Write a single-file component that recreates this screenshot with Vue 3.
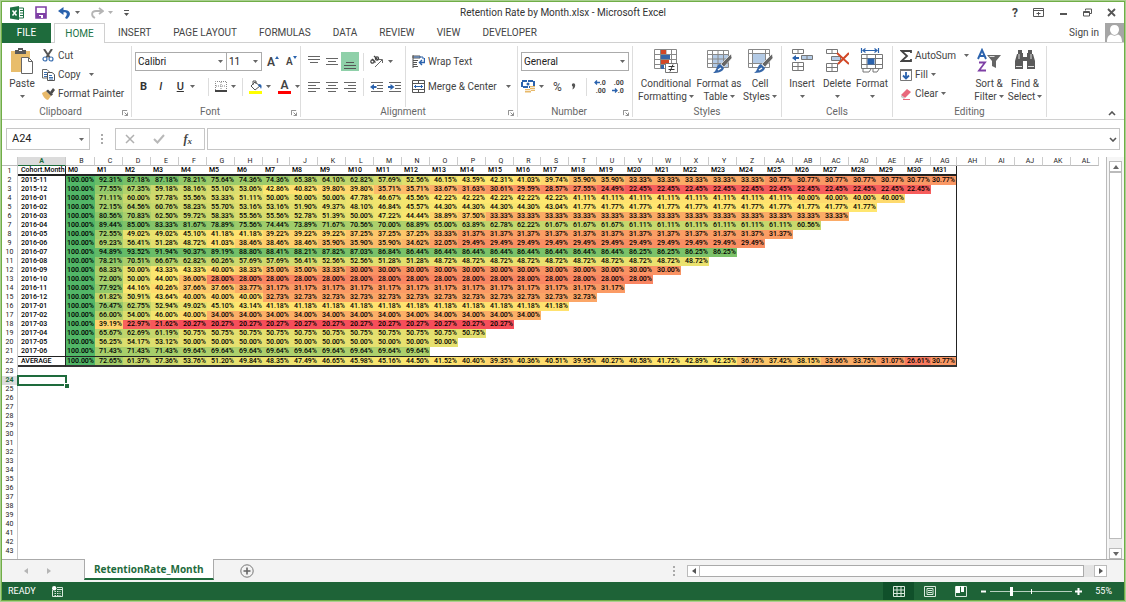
<script setup>
const repeat = (value, count) => Array(count).fill(value)

const cohorts = [
  { name: '2015-11', rates: [92.31, 87.18, 87.18, 78.21, 75.64, 74.36, 74.36, 65.38, 64.1, 62.82, 57.69, 52.56, 46.15, 43.59, 42.31, 41.03, 39.74, 35.9, 35.9, ...repeat(33.33, 5), ...repeat(30.77, 7)] },
  { name: '2015-12', rates: [77.55, 67.35, 59.18, 58.16, 55.1, 53.06, 42.86, 40.82, 39.8, 39.8, 35.71, 35.71, 33.67, 31.63, 30.61, 29.59, 28.57, 27.55, 24.49, ...repeat(22.45, 11)] },
  { name: '2016-01', rates: [71.11, 60, 57.78, 55.56, 53.33, 51.11, 50, 50, 50, 47.78, 46.67, 45.56, ...repeat(42.22, 5), ...repeat(41.11, 8), ...repeat(40, 4)] },
  { name: '2016-02', rates: [72.15, 64.56, 60.76, 58.23, 55.7, 53.16, 53.16, 51.9, 49.37, 48.1, 46.84, 45.57, ...repeat(44.3, 4), 43.04, ...repeat(41.77, 11)] },
  { name: '2016-03', rates: [80.56, 70.83, 62.5, 59.72, 58.33, 55.56, 55.56, 52.78, 51.39, 50, 47.22, 44.44, 38.89, 37.5, ...repeat(33.33, 13)] },
  { name: '2016-04', rates: [89.44, 85, 83.33, 81.67, 78.89, 75.56, 74.44, 73.89, 71.67, 70.56, 70, 68.89, 65, 63.89, 62.78, 62.22, ...repeat(61.67, 3), ...repeat(61.11, 6), 60.56] },
  { name: '2016-05', rates: [72.55, 49.02, 49.02, 45.1, 41.18, 41.18, 39.22, 39.22, 39.22, 37.25, 37.25, 37.25, 33.33, ...repeat(31.37, 12)] },
  { name: '2016-06', rates: [69.23, 56.41, 51.28, 48.72, 41.03, 38.46, 38.46, 38.46, 35.9, 35.9, 35.9, 34.62, 32.05, ...repeat(29.49, 11)] },
  { name: '2016-07', rates: [94.89, 93.52, 91.94, 90.37, 89.19, 88.8, 88.41, 88.21, 87.82, 87.03, 86.84, ...repeat(86.44, 8), ...repeat(86.25, 4)] },
  { name: '2016-08', rates: [78.21, 70.51, 66.67, 62.82, 60.26, 57.69, 57.69, 56.41, 52.56, 52.56, 51.28, 51.28, ...repeat(48.72, 10)] },
  { name: '2016-09', rates: [68.33, 50, 43.33, 43.33, 40, 38.33, 35, 35, 33.33, ...repeat(30, 12)] },
  { name: '2016-10', rates: [72, 50, 44, 36, ...repeat(28, 16)] },
  { name: '2016-11', rates: [77.92, 44.16, 40.26, 37.66, 37.66, 33.77, ...repeat(31.17, 13)] },
  { name: '2016-12', rates: [61.82, 50.91, 43.64, 40, 40, 40, ...repeat(32.73, 12)] },
  { name: '2017-01', rates: [76.47, 62.75, 52.94, 49.02, 45.1, 43.14, ...repeat(41.18, 11)] },
  { name: '2017-02', rates: [66, 54, 46, 40, ...repeat(34, 12)] },
  { name: '2017-03', rates: [39.19, 22.97, 21.62, ...repeat(20.27, 12)] },
  { name: '2017-04', rates: [65.67, 62.69, 61.19, ...repeat(50.75, 11)] },
  { name: '2017-05', rates: [56.25, 54.17, 53.12, ...repeat(50, 10)] },
  { name: '2017-06', rates: [71.43, 71.43, 71.43, ...repeat(69.64, 9)] },
  { name: 'AVERAGE', rates: [72.65, 61.37, 57.36, 53.76, 51.2, 49.84, 48.35, 47.49, 46.65, 45.98, 45.16, 44.5, 41.52, 40.4, 39.35, 40.36, 40.51, 39.95, 40.27, 40.58, 41.72, 42.89, 42.25, 36.75, 37.42, 38.15, 33.66, 33.75, 31.07, 26.61, 30.77] },
]

const letter = (n) => (n < 26 ? String.fromCharCode(65 + n) : 'A' + String.fromCharCode(39 + n))
const columns = Array.from({ length: 38 }, (_, i) => letter(i))
const months = Array.from({ length: 32 }, (_, i) => 'M' + i)
const emptyRows = Array.from({ length: 21 }, (_, i) => i + 23)

const narrow = ['I', 'R']
const wide = ['B', 'AH', 'AI']
const columnClass = (c) => {
  if (c === 'A') return 'c-first'
  if (c === 'AF' || c === 'AG') return 'c-last'
  if (narrow.includes(c)) return 'c-narrow'
  return wide.includes(c) ? 'c-wide' : 'c-std'
}

// Three-stop colour scale: red at the minimum, yellow at the middle, green at 100%.
const low = [246, 78, 90]
const mid = [255, 232, 112]
const high = [82, 182, 103]
const shade = (v) => {
  const [from, to, t] = v < 42 ? [low, mid, (v - 20.27) / 21.73] : [mid, high, (v - 42) / 58]
  return `rgb(${from.map((c, i) => Math.round(c + (to[i] - c) * t)).join(',')})`
}

const tabs = ['INSERT', 'PAGE LAYOUT', 'FORMULAS', 'DATA', 'REVIEW', 'VIEW', 'DEVELOPER']
</script>

<template>
  <div class="window">
    <header class="titlebar">
      <div class="quick">
        <svg width="14" height="14" viewBox="0 0 14 14"><path d="M0 1.500 9 0v14L0 12.500z" fill="#1e7145" /><path d="M9 2h4.500v10H9" fill="#fff" stroke="#1e7145" /><path d="M10 4.500h3M10 7h3M10 9.500h3" stroke="#1e7145" /><path d="m2.500 4.500 4 5m0-5-4 5" stroke="#fff" stroke-width="1.500" /></svg>
        <button aria-label="Save"><svg width="12" height="13" viewBox="0 0 12 13"><path d="M1 1h10v11H1z" fill="#fff" stroke="#7e3fa5" stroke-width="1.600" /><path d="M1 7h10v5H1z" fill="#7e3fa5" /><path d="M4 9h4v3H4z" fill="#fff" /><path d="M4 10h2v2H4z" fill="#7e3fa5" /></svg></button>
        <button class="undo" aria-label="Undo"><svg width="13" height="12" viewBox="0 0 13 12"><path d="M5.500 0 0 4l5.500 4V5.200C9 5 10 6.500 7 11l2 1c5-5 3.500-9-3.500-9z" fill="#2a62ad" /></svg><svg class="caret" viewBox="0 0 5 3"><path d="M0 0h5L2.500 3z" /></svg></button>
        <button class="redo" aria-label="Redo"><svg width="13" height="12" viewBox="0 0 13 12"><path d="m8 1 4 3-4 3M12 4H5C0 4 0 9 4 11" fill="none" stroke="#b5b5b5" stroke-width="1.800" /></svg><svg class="caret" viewBox="0 0 5 3"><path d="M0 0h5L2.500 3z" /></svg></button>
        <button aria-label="Customize Quick Access Toolbar"><svg width="5" height="6" viewBox="0 0 5 6"><path d="M0 0h5v1H0zM0 3h5L2.500 6z" fill="#555" /></svg></button>
      </div>
      <h1>Retention Rate by Month.xlsx - Microsoft Excel</h1>
      <div class="controls">
        <button class="help" aria-label="Help">?</button>
        <button aria-label="Ribbon Display Options"><svg width="11" height="9" viewBox="0 0 11 9"><path d="M.5.500h10v8H.5zM.5 2.500h10M5.500 7.500V4M3.500 5.500h4" fill="none" stroke="#555" /></svg></button>
        <button aria-label="Minimize"><svg width="9" height="9" viewBox="0 0 9 9"><path d="M1 5h7v2H1z" fill="#555" /></svg></button>
        <button aria-label="Restore"><svg width="9" height="9" viewBox="0 0 9 9"><path d="M2.500 2.500V1h6v4.500H7M.5 3.500h6v4.500h-6zM.5 4.500h6" fill="none" stroke="#555" /></svg></button>
        <button aria-label="Close"><svg width="9" height="9" viewBox="0 0 9 9"><path d="m1 1 7 7m0-7L1 8" stroke="#555" stroke-width="1.800" /></svg></button>
      </div>
    </header>

    <nav class="tabs">
      <button class="file">FILE</button>
      <button class="home">HOME</button>
      <button v-for="t in tabs" :key="t" class="tab">{{ t }}</button>
      <a class="signin" href="#">Sign in</a>
      <svg class="avatar" viewBox="0 0 19 19"><path d="M0 0h19v19H0z" fill="#a6a6a6" /><path d="M9.500 2c3 0 4.500 2 4.500 4.500S12 12 9.500 12 5 9 5 6.500 6.500 2 9.500 2z" fill="#fff" /><path d="M2 19c0-5 2-7 4-7.500 2 1.500 5 1.500 7 0 2 .5 4 2.500 4 7.500z" fill="#fff" /></svg>
    </nav>

    <section class="ribbon">
      <div class="group clipboard">
        <div class="body">
          <button class="big paste"><svg width="24" height="26" viewBox="0 0 24 26"><path d="M1 3h19v21H1z" fill="#e8bd6c" /><path d="M5 2h3V0h5v2h3v4H5z" fill="#595959" /><path d="M9 2h3v1H9z" fill="#fff" /><path d="M11.500 9.500h7l4 4v12h-11z" fill="#fff" stroke="#666" /><path d="M18.500 9.500v4h4" fill="none" stroke="#666" /></svg>Paste<svg class="caret" viewBox="0 0 5 3"><path d="M0 0h5L2.500 3z" /></svg></button>
          <div class="list">
            <button><svg width="13" height="13" viewBox="0 0 13 13"><path d="M2 0 8 9M10 0 4 9" stroke="#555" stroke-width="2" /><circle cx="3" cy="10" r="2" fill="#fff" stroke="#3b6fb0" stroke-width="1.200" /><circle cx="9" cy="10" r="2" fill="#fff" stroke="#3b6fb0" stroke-width="1.200" /></svg>Cut</button>
            <button><svg width="13" height="12" viewBox="0 0 13 12"><path d="M.5.500H5l2 2V9H.5z" fill="#fff" stroke="#666" /><path d="M2 3.500h3M2 5.500h3M2 7.500h3" stroke="#3b6fb0" /><path d="M5.500 3.500H10l2.500 2v6h-7z" fill="#fff" stroke="#555" /><path d="M7 6.500h3M7 8.500h4M7 10h4" stroke="#3b6fb0" /></svg>Copy<svg class="caret far" viewBox="0 0 5 3"><path d="M0 0h5L2.500 3z" /></svg></button>
            <button><svg width="13" height="12" viewBox="0 0 13 12"><path d="m0 5 4-2 5 5-3 4c-2 0-5-3-6-7z" fill="#e8b96a" /><path d="m4 3 2-1.500 5 5L9 8z" fill="#4a4a4a" /><path d="m8 4 3-4 2 2-3 4z" fill="#4a4a4a" /></svg>Format Painter</button>
          </div>
        </div>
        <div class="caption">Clipboard<svg class="launch" viewBox="0 0 7 7"><path d="M.5 6V.500H6M3 3l3 3M6.500 3v3.500H3" /></svg></div>
      </div>

      <div class="group font">
        <div class="body rows">
          <div class="row">
            <label class="combo family"><select aria-label="Font"><option>Calibri</option></select><svg class="caret" viewBox="0 0 5 3"><path d="M0 0h5L2.500 3z" /></svg></label>
            <label class="combo size"><select aria-label="Font Size"><option>11</option></select><svg class="caret" viewBox="0 0 5 3"><path d="M0 0h5L2.500 3z" /></svg></label>
            <button class="grow" aria-label="Increase Font Size"><span class="ltr">A</span><svg width="4" height="12" viewBox="0 0 4 12"><path d="M0 3h4L2 0z" fill="#2a62ad" /></svg></button>
            <button class="shrink" aria-label="Decrease Font Size"><span class="ltr">A</span><svg width="4" height="12" viewBox="0 0 4 12"><path d="M0 0h4L2 3z" fill="#2a62ad" /></svg></button>
          </div>
          <div class="row second">
            <button class="g b" aria-label="Bold"><b>B</b></button>
            <button class="g i" aria-label="Italic"><i>I</i></button>
            <button class="g u" aria-label="Underline"><u>U</u><svg class="caret" viewBox="0 0 5 3"><path d="M0 0h5L2.500 3z" /></svg></button>
            <span class="sep" />
            <button aria-label="Borders"><svg width="12" height="11" viewBox="0 0 12 11"><path d="M.5 9V.500h11V9M6 1v8M1 5h10" fill="none" stroke="#888" stroke-dasharray="1 1" /><path d="M0 10h12" stroke="#444" stroke-width="2" /></svg><svg class="caret" viewBox="0 0 5 3"><path d="M0 0h5L2.500 3z" /></svg></button>
            <span class="sep" />
            <button aria-label="Fill Color"><svg width="13" height="14" viewBox="0 0 13 14"><path d="m2 6 4-4 5 4-5 4z" fill="#fff" stroke="#555" /><path d="M4 5V1h3v3" fill="none" stroke="#555" /><path d="M10 4c3 0 3 3 2 5-1-2-1-3-3-3z" fill="#2a62ad" /><path d="M0 11h13v3H0z" fill="#ff0" /></svg><svg class="caret" viewBox="0 0 5 3"><path d="M0 0h5L2.500 3z" /></svg></button>
            <button class="fcolor" aria-label="Font Color"><span class="ltr">A</span><svg class="caret" viewBox="0 0 5 3"><path d="M0 0h5L2.500 3z" /></svg></button>
          </div>
        </div>
        <div class="caption">Font<svg class="launch" viewBox="0 0 7 7"><path d="M.5 6V.500H6M3 3l3 3M6.500 3v3.500H3" /></svg></div>
      </div>

      <div class="group align">
        <div class="body">
          <div class="rows">
            <div class="row tight">
              <button class="cell" aria-label="Top Align"><svg width="12" height="14" viewBox="0 0 12 14"><path d="M0 1.500h12M0 4.500h12M2 7.500h8" stroke="#666" /></svg></button>
              <button class="cell" aria-label="Middle Align"><svg width="12" height="14" viewBox="0 0 12 14"><path d="M0 3.500h12M2 6.500h8M0 9.500h12" stroke="#666" /></svg></button>
              <button class="cell on" aria-label="Bottom Align"><svg width="12" height="14" viewBox="0 0 12 14"><path d="M2 7.500h8M0 10.500h12M0 13.500h12" stroke="#555" /></svg></button>
              <span class="sep" />
              <button class="orient" aria-label="Orientation"><svg width="14" height="13" viewBox="0 0 14 13"><path d="M5 12 12 5M9 4.500h3.500V8" fill="none" stroke="#666" /><circle cx="2.500" cy="6.500" r="1.700" fill="none" stroke="#444" stroke-width="1.200" /><path d="m2 4 3.500 3.500M4 1l4 4" stroke="#444" stroke-width="1.200" /><circle cx="7" cy="3.500" r="1.600" fill="none" stroke="#444" stroke-width="1.200" /></svg><svg class="caret" viewBox="0 0 5 3"><path d="M0 0h5L2.500 3z" /></svg></button>
            </div>
            <div class="row tight second">
              <button class="cell" aria-label="Align Left"><svg width="12" height="10" viewBox="0 0 12 10"><path d="M0 .5h12M0 3.500h8M0 6.500h12M0 9.500h8" stroke="#666" /></svg></button>
              <button class="cell" aria-label="Center"><svg width="12" height="10" viewBox="0 0 12 10"><path d="M0 .5h12M2 3.500h8M0 6.500h12M2 9.500h8" stroke="#666" /></svg></button>
              <button class="cell" aria-label="Align Right"><svg width="12" height="10" viewBox="0 0 12 10"><path d="M0 .5h12M4 3.500h8M0 6.500h12M4 9.500h8" stroke="#666" /></svg></button>
              <span class="sep" />
              <button class="cell" aria-label="Decrease Indent"><svg width="14" height="10" viewBox="0 0 14 10"><path d="M1 .5h12M7 3.500h6M7 6.500h6M1 9.500h12" stroke="#666" /><path d="M0 5l4-3v2h2.500v2H4v2z" fill="#2a62ad" /></svg></button>
              <button class="cell" aria-label="Increase Indent"><svg width="14" height="10" viewBox="0 0 14 10"><path d="M1 .5h12M7 3.500h6M7 6.500h6M1 9.500h12" stroke="#666" /><path d="M6.500 5l-4-3v2H0v2h2.500v2z" fill="#2a62ad" /></svg></button>
            </div>
          </div>
          <div class="rows wraps">
            <div class="row"><button><svg width="13" height="13" viewBox="0 0 13 13"><path d="M1 0v13M1 5.500h5M1 7.500h4M1 9.500h4M1 11.500h5M1 1h7v2H1z" fill="none" stroke="#555" /><path d="M2 2h9v2" stroke="#2a62ad" fill="none" /><path d="M12.500 3v4.500H8M10 5 7.500 7.500 10 10" fill="none" stroke="#2a62ad" stroke-width="1.400" /></svg>Wrap Text</button></div>
            <div class="row second"><button><svg width="13" height="13" viewBox="0 0 13 13"><path d="M.5.500h12v12H.5zM.5 3.500h12M.5 9.500h12M6.500 0v3.500M6.500 9.500V13" fill="none" stroke="#555" /><path d="M2 6.500h9M4 5 2.500 6.500 4 8M9 5l1.500 1.500L9 8" fill="none" stroke="#2a62ad" /></svg>Merge &amp; Center<svg class="caret far" viewBox="0 0 5 3"><path d="M0 0h5L2.500 3z" /></svg></button></div>
          </div>
        </div>
        <div class="caption">Alignment<svg class="launch" viewBox="0 0 7 7"><path d="M.5 6V.500H6M3 3l3 3M6.500 3v3.500H3" /></svg></div>
      </div>

      <div class="group number">
        <div class="body rows">
          <div class="row">
            <label class="combo format"><select aria-label="Number Format"><option>General</option></select><svg class="caret" viewBox="0 0 5 3"><path d="M0 0h5L2.500 3z" /></svg></label>
          </div>
          <div class="row second">
            <button aria-label="Accounting Number Format"><svg width="14" height="13" viewBox="0 0 14 13"><path d="M1 1h12v6H1z" fill="#fff" stroke="#2a62ad" stroke-width="2" stroke-dasharray="5 1" /><circle cx="7" cy="4" r="1.500" fill="#2a62ad" /><path d="M4 9h6v3.500H4zM9 6h5v5H9z" fill="#e8b96a" /><path d="M4 10.500h6M9 7.500h5M9 9.500h5" stroke="#fff" stroke-width=".7" /></svg><svg class="caret" viewBox="0 0 5 3"><path d="M0 0h5L2.500 3z" /></svg></button>
            <button class="pct" aria-label="Percent Style">%</button>
            <button class="comma" aria-label="Comma Style"><svg width="5" height="8" viewBox="0 0 5 8"><circle cx="2.500" cy="2" r="1.700" fill="#555" /><path d="M4.200 2c0 2-1 3.500-2.700 4.500L2 3z" fill="#555" /></svg></button>
            <span class="sep" />
            <button class="dec" aria-label="Increase Decimal"><span><svg width="6" height="5" viewBox="0 0 6 5"><path d="M6 2.500H1M3 .5 1 2.500l2 2" fill="none" stroke="#2a62ad" stroke-width="1.300" /></svg>.0</span><span>.00</span></button>
            <button class="dec" aria-label="Decrease Decimal"><span>.00</span><span><svg width="6" height="5" viewBox="0 0 6 5"><path d="M0 2.500h5M3 .5l2 2-2 2" fill="none" stroke="#2a62ad" stroke-width="1.300" /></svg>.0</span></button>
          </div>
        </div>
        <div class="caption">Number<svg class="launch" viewBox="0 0 7 7"><path d="M.5 6V.500H6M3 3l3 3M6.500 3v3.500H3" /></svg></div>
      </div>

      <div class="group styles">
        <div class="body">
          <button class="big conditional"><svg width="26" height="26" viewBox="0 0 26 26"><path d="M1.500 1.500h22v19h-22zM1.500 6.500h22M1.500 11.500h22M1.500 16.500h22M7.500 1v19M13 1v19M18.500 1v19" fill="#fff" stroke="#888" /><path d="M8 2h5v4H8zM8 12h8v4H8z" fill="#d24726" /><path d="M8 7h9v4H8zM8 17h3v4H8z" fill="#3566a8" /><path d="M12.500 15.500h12v9h-12z" fill="#fff" stroke="#777" /><path d="M15.500 18.500h6M15.500 21.500h6M20 16.500l-3 7" stroke="#333" /></svg><span>Conditional</span><span>Formatting<svg class="caret" viewBox="0 0 5 3"><path d="M0 0h5L2.500 3z" /></svg></span></button>
          <button class="big as-table"><svg width="26" height="26" viewBox="0 0 26 26"><path d="M1.500 2.500h21v17h-21z" fill="#fff" stroke="#888" /><path d="M7 7h15v12H7z" fill="#b4cbe6" /><path d="M1.500 6.500h21M1.500 11h21M1.500 15.500h21M6.500 2v17M12 2v17M17.500 2v17" stroke="#888" /><path d="m25 6 1 4-8 9-3-3z" fill="#666" stroke="#fff" stroke-width=".6" /><path d="m14 16 4 4c-1 4-6 5-11 5 4-2 3-8 7-9z" fill="#3566a8" /><path d="m12 22 3-2" stroke="#fff" stroke-width="1.500" /></svg><span>Format as</span><span>Table<svg class="caret" viewBox="0 0 5 3"><path d="M0 0h5L2.500 3z" /></svg></span></button>
          <button class="big cell-styles"><svg width="26" height="26" viewBox="0 0 26 26"><path d="M1.500 1.500h21v18h-21zM1.500 5.500h21M1.500 15.500h21M5.500 1v18M18.500 1v18" fill="#fff" stroke="#888" /><path d="M6 6h12v9H6z" fill="#b4cbe6" /><path d="m25 6 1 4-8 9-3-3z" fill="#666" stroke="#fff" stroke-width=".6" /><path d="m14 16 4 4c-1 4-6 5-11 5 4-2 3-8 7-9z" fill="#3566a8" /><path d="m12 22 3-2" stroke="#fff" stroke-width="1.500" /></svg><span>Cell</span><span>Styles<svg class="caret" viewBox="0 0 5 3"><path d="M0 0h5L2.500 3z" /></svg></span></button>
        </div>
        <div class="caption">Styles</div>
      </div>

      <div class="group cells">
        <div class="body">
          <button class="big"><svg width="24" height="26" viewBox="0 0 24 26"><path d="M2.500 1.500h11v4h-11zM8 1v4M2.500 14.500h11v8h-11zM2.500 18.500h11M8 14v8" fill="#fff" stroke="#777" /><path d="M11.500 7.500h11v4h-11zM17 7v5" fill="#b4cbe6" stroke="#777" /><path d="m2 10 4-3v2h3v2H6v2z" fill="#2a62ad" /></svg><span>Insert</span><svg class="caret" viewBox="0 0 5 3"><path d="M0 0h5L2.500 3z" /></svg></button>
          <button class="big"><svg width="24" height="26" viewBox="0 0 24 26"><path d="M1.500 1.500h11v4h-11zM7 1v4M1.500 15.500h11v8h-11zM1.500 19.500h11M7 15v8" fill="#fff" stroke="#777" /><path d="M6.500 8.500h9v4h-9z" fill="#b4cbe6" stroke="#777" /><path d="m12 5 12 11M24 5 13 16" stroke="#d24726" stroke-width="2" /></svg><span>Delete</span><svg class="caret" viewBox="0 0 5 3"><path d="M0 0h5L2.500 3z" /></svg></button>
          <button class="big"><svg width="24" height="26" viewBox="0 0 24 26"><path d="M1.500 0v5M18.500 0v5M3 2.500h14M5.500.500 3 2.500l2.500 2M14.500.500l2.500 2-2.500 2" fill="none" stroke="#2a62ad" stroke-width="1.200" /><path d="M1.500 6.500h21v14h-21zM1.500 10.500h21M1.500 16.500h21M7 6v14M15.500 6v14" fill="#fff" stroke="#777" /><path d="M7.500 10.500h7v6h-7z" fill="#2a62ad" /><path d="M3 21v3h6l2-3M13 21v3h4l2-3" fill="none" stroke="#777" /></svg><span>Format</span><svg class="caret" viewBox="0 0 5 3"><path d="M0 0h5L2.500 3z" /></svg></button>
        </div>
        <div class="caption">Cells</div>
      </div>

      <div class="group editing">
        <div class="body">
          <div class="list">
            <button><svg width="12" height="12" viewBox="0 0 12 12"><path d="M11 3V1H1.500L7 6l-5.500 5H11V9" fill="none" stroke="#444" stroke-width="1.800" /></svg>AutoSum<svg class="caret far" viewBox="0 0 5 3"><path d="M0 0h5L2.500 3z" /></svg></button>
            <button><svg width="12" height="12" viewBox="0 0 12 12"><path d="M.5.500h11v11H.5z" fill="#fff" stroke="#777" /><path d="M0 0h12v2H0z" fill="#777" /><path d="M6 3v6M3 6.500 6 9.500l3-3" fill="none" stroke="#2a62ad" stroke-width="1.800" /></svg>Fill<svg class="caret" viewBox="0 0 5 3"><path d="M0 0h5L2.500 3z" /></svg></button>
            <button><svg width="12" height="12" viewBox="0 0 12 12"><path d="m1 7 6-6 4 3-6 6z" fill="#e8687c" /><path d="m1 7 4 3-1 1-3-2z" fill="#c9c9c9" /><path d="M3 11.500h7" stroke="#e8687c" /></svg>Clear<svg class="caret" viewBox="0 0 5 3"><path d="M0 0h5L2.500 3z" /></svg></button>
          </div>
          <button class="big"><svg width="26" height="26" viewBox="0 0 26 26"><path d="m2 11 4-9 4 9M3.500 8h5" fill="none" stroke="#2a62ad" stroke-width="1.900" /><path d="M3 14.500h6l-6 8h7" fill="none" stroke="#7e3fa5" stroke-width="1.800" /><path d="M11 7h14l-5 6v7l-4-2v-5z" fill="#666" /><path d="M13.500 8.500h5" stroke="#ddd" /></svg><span>Sort &amp;</span><span>Filter<svg class="caret" viewBox="0 0 5 3"><path d="M0 0h5L2.500 3z" /></svg></span></button>
          <button class="big"><svg width="26" height="26" viewBox="0 0 26 26"><path d="M6 2h4v3h1v4h4V5h1V2h4v4h1l2 7v8h-8v-8h-4v8H3v-8l2-7h1z" fill="#5a5a5a" /><path d="M4 18.500h6M16 18.500h6M7 6v5M19 6v5" stroke="#ddd" /></svg><span>Find &amp;</span><span>Select<svg class="caret" viewBox="0 0 5 3"><path d="M0 0h5L2.500 3z" /></svg></span></button>
        </div>
        <div class="caption">Editing</div>
      </div>
      <button class="collapse" aria-label="Collapse the Ribbon"><svg width="8" height="5" viewBox="0 0 8 5"><path d="m1 4 3-3 3 3" fill="none" stroke="#555" stroke-width="1.600" /></svg></button>
    </section>

    <section class="formula">
      <label class="namebox"><input aria-label="Name Box" value="A24"><svg class="caret" viewBox="0 0 5 3"><path d="M0 0h5L2.500 3z" /></svg></label>
      <svg class="dots" width="2" height="10" viewBox="0 0 2 10"><path d="M0 0h2v2H0zM0 4h2v2H0zM0 8h2v2H0z" fill="#aaa" /></svg>
      <div class="fx">
        <button aria-label="Cancel"><svg width="10" height="10" viewBox="0 0 10 10"><path d="m1 1 8 8m0-8L1 9" stroke="#b0b0b0" stroke-width="1.500" /></svg></button>
        <button aria-label="Enter"><svg width="12" height="10" viewBox="0 0 12 10"><path d="m1 5 3.500 3.500L11 1" fill="none" stroke="#b8b8b8" stroke-width="2" /></svg></button>
        <button class="fn" aria-label="Insert Function">f<small>x</small></button>
      </div>
      <label class="entry"><input aria-label="Formula Bar"><svg width="8" height="5" viewBox="0 0 8 5"><path d="m1 1 3 3 3-3" fill="none" stroke="#555" stroke-width="1.600" /></svg></label>
    </section>

    <main class="sheet">
      <div class="grid">
        <table>
          <colgroup><col class="c-head"><col v-for="c in columns" :key="c" :class="columnClass(c)"></colgroup>
          <thead>
            <tr class="letters"><th class="corner"></th><th v-for="c in columns" :key="c" :class="{ active: c === 'A' }">{{ c }}</th></tr>
          </thead>
          <tbody>
            <tr class="months"><th>1</th><td class="name">Cohort.Month</td><td v-for="m in months" :key="m" :class="{ edge: m === 'M31' }">{{ m }}</td></tr>
            <tr v-for="(row, r) in cohorts" :key="row.name" :class="{ average: row.name === 'AVERAGE' }">
              <th>{{ r + 2 }}</th>
              <td class="name">{{ row.name }}</td>
              <td class="rate" :style="{ background: shade(100) }">100.00%</td>
              <td v-for="(v, i) in row.rates" :key="i" class="rate" :class="{ edge: i === 30 }" :style="{ background: shade(v) }">{{ v.toFixed(2) }}%</td>
              <td v-if="row.rates.length < 31" class="edge" :colspan="31 - row.rates.length"></td>
            </tr>
            <tr v-for="n in emptyRows" :key="n"><th :class="{ active: n === 24 }">{{ n }}</th><td :class="{ selected: n === 24 }"></td></tr>
            <tr><th></th></tr>
          </tbody>
        </table>
      </div>
      <div class="vscroll">
        <button aria-label="Scroll up"><svg width="6" height="4" viewBox="0 0 6 4"><path d="M0 4h6L3 0z" fill="#666" /></svg></button>
        <div class="track"><div class="thumb" /></div>
        <button aria-label="Scroll down"><svg width="6" height="4" viewBox="0 0 6 4"><path d="M0 0h6L3 4z" fill="#666" /></svg></button>
      </div>
    </main>

    <section class="sheets">
      <button class="step" aria-label="Previous sheet"><svg width="4" height="6" viewBox="0 0 4 6"><path d="M4 0v6L0 3z" fill="#b5b5b5" /></svg></button>
      <button class="step" aria-label="Next sheet"><svg width="4" height="6" viewBox="0 0 4 6"><path d="M0 0v6l4-3z" fill="#b5b5b5" /></svg></button>
      <button class="sheet-tab">RetentionRate_Month</button>
      <button class="add" aria-label="New sheet"><svg width="14" height="14" viewBox="0 0 14 14"><circle cx="7" cy="7" r="6.200" fill="none" stroke="#777" /><path d="M7 3.500v7M3.500 7h7" stroke="#666" stroke-width="1.600" /></svg></button>
      <svg class="dots split" width="2" height="10" viewBox="0 0 2 10"><path d="M0 0h2v2H0zM0 4h2v2H0zM0 8h2v2H0z" fill="#aaa" /></svg>
      <div class="hscroll">
        <button aria-label="Scroll left"><svg width="4" height="6" viewBox="0 0 4 6"><path d="M4 0v6L0 3z" fill="#555" /></svg></button>
        <div class="track"><div class="thumb" /></div>
        <button aria-label="Scroll right"><svg width="4" height="6" viewBox="0 0 4 6"><path d="M0 0v6l4-3z" fill="#555" /></svg></button>
      </div>
    </section>

    <footer class="status">
      <span>READY</span>
      <button class="macro" aria-label="Record Macro"><svg width="11" height="11" viewBox="0 0 11 11"><path d="M.5 4v6.500h10v-9H5M5 3.500h5.500" fill="none" stroke="#d8e8dc" /><circle cx="2.200" cy="2.200" r="2.200" fill="#fff" /><path d="M2.500 5.500h6M2.500 7.500h6M2.500 9.500h6" stroke="#d8e8dc" stroke-dasharray="1.500 1" /></svg></button>
      <button class="view on" aria-label="Normal"><svg width="12" height="11" viewBox="0 0 12 11"><path d="M.5.500h11v10H.5zM4 0v11M8 0v11M0 4h12M0 7.500h12" fill="none" stroke="#d8e8dc" /></svg></button>
      <button class="view" aria-label="Page Layout"><svg width="12" height="11" viewBox="0 0 12 11"><path d="M.5.500h11v10H.5zM3 2.500h6v6H3zM4 4.500h4M4 6.500h4" fill="none" stroke="#d8e8dc" /></svg></button>
      <button class="view" aria-label="Page Break Preview"><svg width="12" height="11" viewBox="0 0 12 11"><path d="M.5.500h11v10H.5z" fill="none" stroke="#d8e8dc" /><path d="M1 0h4v7H1zM6 0h3v6H6z" fill="#fff" /></svg></button>
      <button class="zoom-btn out" aria-label="Zoom Out"><svg width="7" height="7" viewBox="0 0 7 7"><path d="M1 2.500h5v2H1z" fill="#fff" /></svg></button>
      <input class="zoom" type="range" min="10" max="190" value="55" aria-label="Zoom">
      <button class="zoom-btn" aria-label="Zoom In"><svg width="7" height="7" viewBox="0 0 7 7"><path d="M0 2.500h2.500V0h2v2.500H7v2H4.500V7h-2V4.500H0z" fill="#fff" /></svg></button>
      <span class="level">55%</span>
    </footer>
  </div>
</template>

<style>
body { margin: 0; }
</style>

<style scoped>
* { box-sizing: border-box; }
.window { display: flex; flex-direction: column; height: 100vh; overflow: hidden; background: #fff; color: #444; border: 1px solid #a9cf8f; box-shadow: inset 0 0 0 1px #70ad47; padding: 1px; font: 10px/14px Roboto, "Open Sans", sans-serif; }
button { display: inline-flex; align-items: center; justify-content: center; background: none; border: 0; padding: 0; margin: 0; color: inherit; font: inherit; white-space: nowrap; }
input, select { font: inherit; color: #222; background: none; border: 0; padding: 0; margin: 0; outline: 0; min-width: 0; }
svg { flex: none; display: block; }
.caret { width: 5px; height: 3px; fill: #666; }
h1 { margin: 0; font: inherit; color: #333; }

.titlebar { display: grid; grid-template-columns: 1fr auto 1fr; align-items: center; height: 21px; flex: none; }
.quick { display: flex; align-items: center; gap: 11px; padding-left: 8px; }
.quick button { gap: 4px; }
.redo .caret { opacity: .5; }
.controls { display: flex; justify-content: flex-end; align-items: center; gap: 15px; padding-right: 8px; }
.help { font-weight: 700; font-size: 12px; }

.tabs { display: flex; align-items: stretch; height: 20px; flex: none; border-bottom: 1px solid #d0d0d0; }
.file { width: 49px; background: #1e6b3c; color: #fff; height: 20px; }
.home { width: 51px; margin: 0 2px -1px 3px; color: #217346; background: #fff; border: 1px solid #d0d0d0; border-bottom: 0; }
.tab { padding: 0 11px; }
.signin { margin-left: auto; padding-right: 6px; color: #444; text-decoration: none; align-self: center; }
.avatar { width: 19px; height: 19px; }

.ribbon { display: flex; height: 77px; flex: none; padding-top: 3px; border-bottom: 1px solid #d0d0d0; }
.group { display: flex; flex-direction: column; border-right: 1px solid #ddd; height: 71px; flex: none; }
.clipboard { width: 130px; }
.font { width: 169px; }
.align { width: 217px; }
.number { width: 115px; }
.styles { width: 149px; }
.cells { width: 111px; }
.editing { width: 154px; }
.body { display: flex; flex: 1; min-height: 0; }
.caption { position: relative; text-align: center; line-height: 10px; padding: 0 12px 0 0; color: #666; }
.styles .caption, .cells .caption, .editing .caption { padding-right: 0; }
.launch { position: absolute; right: 3px; top: 3px; width: 6px; height: 6px; fill: none; stroke: #777; }
.big { flex-direction: column; justify-content: flex-start; line-height: 13px; padding-top: 2px; }
.big > svg:first-child { margin-bottom: 3px; }
.big span { display: flex; align-items: center; gap: 2px; }
.big > .caret { margin-top: 5px; }
.paste { width: 40px; }
.list { display: flex; flex-direction: column; }
.list button { height: 19px; justify-content: flex-start; gap: 3px; }
.caret.far { margin-left: 5px; }
.rows { display: flex; flex-direction: column; }
.row { display: flex; align-items: center; height: 19px; margin-top: 6px; flex: none; }
.font .body, .number .body { padding-left: 3px; }
.combo { display: flex; align-items: center; justify-content: space-between; height: 19px; border: 1px solid #ababab; padding: 0 3px 0 2px; background: #fff; }
.combo select { appearance: none; flex: 1; }
.family { width: 92px; }
.size { width: 36px; margin-left: -1px; }
.format { width: 108px; }
.ltr { font-size: 12px; font-weight: 600; line-height: 14px; }
.grow { margin-left: 5px; }
.shrink { margin-left: 7px; }
.shrink .ltr { font-size: 10px; }
.g { font-size: 11px; font-weight: 500; width: 18px; color: #333; }
.u { width: 34px; gap: 8px; }
.second button { gap: 6px; }
.sep { width: 1px; height: 18px; background: #ddd; margin: 0 6px; }
.fcolor { margin-left: 7px; }
.second .fcolor { gap: 4px; }
.fcolor .ltr { border-bottom: 3px solid #f00; line-height: 11px; width: 13px; text-align: center; }
.second button:not(.fcolor):not(.g) .caret { margin-left: -2px; }
.align .body { padding-left: 4px; }
.cell { width: 18px; height: 19px; }
.cell.on { background: #8fd0a9; }
.tight .sep { margin: 0 4px; }
.orient { gap: 4px; padding-left: 2px; }
.wraps { border-left: 1px solid #ddd; margin-left: 1px; padding-left: 6px; }
.wraps button, .wraps .second button { gap: 3px; }
.wraps .second button .caret.far { margin-left: 6px; }
.pct { font-size: 12px; margin-left: 9px; }
.comma { margin-left: 9px; }
.number .sep { margin: 0 4px 0 10px; }
.number .dec { flex-direction: column; font-size: 7px; line-height: 8px; font-weight: 700; width: 18px; gap: 0; align-items: flex-end; padding-right: 3px; }
.dec span { display: flex; align-items: center; height: 8px; }
.styles .body { gap: 2px; padding-left: 5px; }
.conditional { width: 56px; }
.as-table { width: 46px; }
.cell-styles { width: 32px; }
.cells .body { gap: 3px; padding-left: 4px; }
.cells .big { width: 32px; }
.editing .body { padding-left: 7px; }
.editing .list { width: 71px; }
.editing .big { width: 36px; }
.collapse { margin: auto 8px 3px auto; }

.formula { display: flex; align-items: center; padding: 8px 4px 7px; height: 37px; flex: none; font-size: 11px; }
.namebox, .fx, .entry { display: flex; align-items: center; height: 22px; border: 1px solid #c6c6c6; }
.namebox { width: 84px; padding: 0 5px; }
.namebox input, .entry input { flex: 1; }
.dots { margin: 0 12px 0 11px; }
.fx { width: 90px; justify-content: space-around; padding: 0 3px 0 0; }
.fn { font: italic 700 12px/14px "Liberation Serif", serif; }
.fn small { font-size: 9px; padding-top: 3px; }
.entry { flex: 1; margin-left: 2px; padding-right: 2px; }

.sheet { display: flex; flex: 1; min-height: 0; border-bottom: 1px solid #aaa; }
.grid { flex: 1; overflow: hidden; border-right: 1px solid #bbb; }
table { table-layout: fixed; border-collapse: separate; border-spacing: 0; width: 0; font: 500 7px/8px Roboto, "Open Sans", sans-serif; color: #000; }
.c-head { width: 16px; }
.c-first { width: 48px; }
.c-std { width: 28px; }
.c-narrow { width: 27px; }
.c-wide { width: 29px; }
.c-last { width: 26px; }
tr { height: 9px; }
th, td { padding: 0; height: 9px; line-height: 9px; white-space: nowrap; text-align: left; }
th { font-weight: 400; text-align: center; color: #222; border-right: 1px solid #ccc; }
.letters th { border-bottom: 1px solid #bbb; line-height: 8px; padding-left: 3px; }
th.active { background: #dcdcdc; color: #1e6b3c; font-weight: 700; }
.letters th.active { border-bottom-color: #1e6b3c; padding-left: 0; }
.months, .months td, .months th { height: 10px; }
.months td { border-bottom: 2px solid #222; line-height: 8px; padding-left: 2px; }
.name { border-right: 1px solid #222; padding-left: 3px; }
.months .name { padding-left: 3px; }
.rate { text-align: right; padding-right: 1px; }
.edge { border-right: 1px solid #222; }
.average, .average td { height: 11px; }
.average td { border-top: 1px solid #222; border-bottom: 2px solid #333; line-height: 8px; }
.selected { position: relative; }
.selected::before { content: ""; position: absolute; inset: -1px; border: 2px solid #1e6b3c; }
.selected::after { content: ""; position: absolute; right: -3px; bottom: -3px; width: 4px; height: 4px; background: #1e6b3c; outline: 1px solid #fff; }

.vscroll { display: flex; flex-direction: column; width: 17px; padding: 4px 2px 0 2px; background: #f6f6f6; }
.vscroll button { height: 11px; border: 1px solid #bbb; background: #fff; flex: none; }
.vscroll .track { flex: 1; min-height: 0; padding-bottom: 9px; background: #eee; }
.vscroll .thumb { height: 100%; background: #fff; border: 1px solid #bbb; }

.sheets { display: flex; align-items: center; height: 22px; flex: none; background: #f3f3f3; padding-right: 17px; }
.step { width: 24px; padding-left: 24px; }
.step + .step { width: 24px; padding-left: 22px; }
.sheet-tab { align-self: stretch; margin: -1px 0 2px 34px; padding: 0 9px; background: #fff; border: 1px solid #aaa; border-top: 0; border-bottom: 2px solid #1e6b3c; color: #1e6b3c; font-family: "Open Sans", "Noto Sans", sans-serif; font-weight: 700; }
.add { margin-left: 26px; }
.split { margin: 0 12px 0 auto; }
.hscroll { display: flex; width: 38%; height: 12px; }
.hscroll button { width: 13px; border: 1px solid #bbb; background: #fff; flex: none; }
.hscroll .track { flex: 1; padding-right: 10px; background: #e4e4e4; }
.hscroll .thumb { height: 100%; background: #fff; border: 1px solid #aaa; border-left: 0; }

.status { display: flex; align-items: center; height: 18px; flex: none; background: #1e6337; color: #fff; font-size: 9px; padding: 0 12px 0 6px; }
.macro { margin: 0 auto 0 16px; }
.view { width: 31px; height: 18px; }
.view.on { background: #10502a; }
.out { margin-left: 4px; }
.zoom { appearance: none; width: 82px; height: 9px; margin: 0 3px; background: linear-gradient(#fff, #fff) center / 1px 5px no-repeat, linear-gradient(#b8d0c0, #b8d0c0) center / 100% 1px no-repeat; }
.zoom::-webkit-slider-thumb { appearance: none; width: 3px; height: 9px; background: #fff; }
.level { margin-left: 13px; }
</style>
